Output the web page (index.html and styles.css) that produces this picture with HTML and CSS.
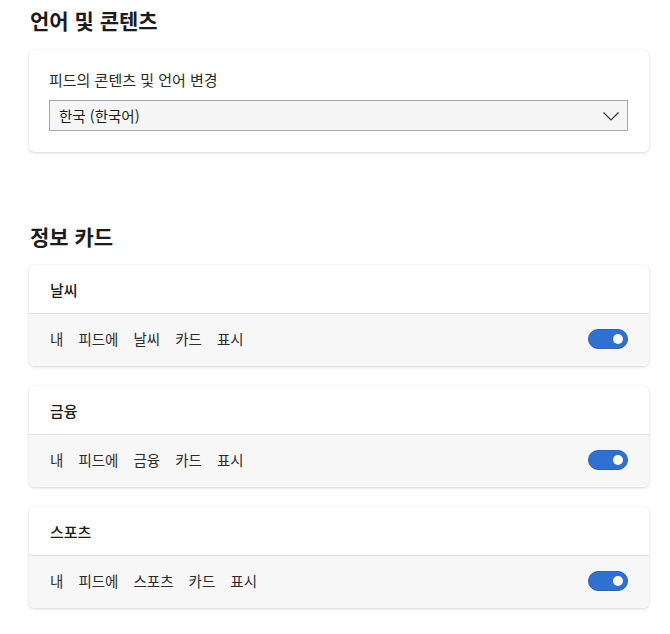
FILE: index.html
```html
<!DOCTYPE html>
<html lang="ko">
<head>
    <meta charset="UTF-8">
    <meta name="viewport" content="width=device-width, initial-scale=1.0">
    <title>피드 설정</title>
    <link rel="stylesheet" href="styles.css">
</head>
<body>
    <div class="page">
        <h2 class="section-title">언어 및 콘텐츠</h2>
        <div class="card lang-card">
            <label class="field-label" for="lang">피드의 콘텐츠 및 언어 변경</label>
            <div class="select-wrap">
                <select id="lang" class="select">
                    <option>한국 (한국어)</option>
                </select>
                <svg class="chevron" width="16" height="9" viewBox="0 0 16 9">
                    <path d="M0.5 0.5 L8 8 L15.5 0.5" fill="none" stroke="#333" stroke-width="1.2"/>
                </svg>
            </div>
        </div>

        <h2 class="section-title info-title">정보 카드</h2>

        <div class="card info-card">
            <div class="info-head">날씨</div>
            <div class="info-body">
                <span class="info-text">내 피드에 날씨 카드 표시</span>
                <span class="toggle on"><span class="knob"></span></span>
            </div>
        </div>

        <div class="card info-card">
            <div class="info-head">금융</div>
            <div class="info-body">
                <span class="info-text">내 피드에 금융 카드 표시</span>
                <span class="toggle on"><span class="knob"></span></span>
            </div>
        </div>

        <div class="card info-card">
            <div class="info-head">스포츠</div>
            <div class="info-body">
                <span class="info-text">내 피드에 스포츠 카드 표시</span>
                <span class="toggle on"><span class="knob"></span></span>
            </div>
        </div>
    </div>
</body>
</html>
```

FILE: styles.css
```css
* {
    margin: 0;
    padding: 0;
    box-sizing: border-box;
}

body {
    font-family: 'Noto Sans CJK KR', 'Noto Sans', sans-serif;
    background: #fff;
    color: #1b1b1b;
}

.page {
    width: 620px;
    margin-left: 29px;
    padding-top: 6px;
}

.section-title {
    font-size: 21px;
    line-height: 28px;
    font-weight: bold;
    padding-left: 1px;
    margin-bottom: 16px;
}

.info-title {
    margin-top: 70px;
    margin-bottom: 15px;
}

.card {
    background: #fff;
    border-radius: 5px;
    box-shadow: 0 1px 3px rgba(0, 0, 0, 0.16), 0 0 1px rgba(0, 0, 0, 0.08);
    overflow: hidden;
}

.lang-card {
    padding: 20px 21px 21px 20px;
}

.field-label {
    display: block;
    font-size: 15px;
    line-height: 20px;
    color: #2b2b2b;
    margin-bottom: 10px;
}

.select-wrap {
    position: relative;
}

.select {
    appearance: none;
    -webkit-appearance: none;
    display: block;
    width: 100%;
    height: 31px;
    padding-left: 9px;
    font-family: inherit;
    font-size: 14.5px;
    color: #1b1b1b;
    background: #f5f5f5;
    border: 1px solid #a8a8a8;
    border-radius: 0;
    outline: none;
}

.chevron {
    position: absolute;
    right: 9px;
    top: 12px;
    pointer-events: none;
}

.info-card {
    margin-bottom: 20px;
}

.info-head {
    height: 49px;
    display: flex;
    align-items: center;
    padding: 0 21px;
    font-size: 15px;
    font-weight: 500;
    color: #1b1b1b;
    border-bottom: 1px solid #e1e1e1;
}

.info-body {
    height: 52px;
    display: flex;
    align-items: center;
    justify-content: space-between;
    padding: 0 21px;
    background: #f7f7f7;
}

.info-text {
    font-size: 14.5px;
    color: #2b2b2b;
    word-spacing: 11px;
    margin-top: -3px;
}

.toggle {
    width: 40px;
    height: 20px;
    border-radius: 10px;
    background: #2f70d1;
    border: 1px solid #2a63b8;
    display: flex;
    align-items: center;
    justify-content: flex-end;
    padding-right: 4px;
    margin-top: -3px;
}

.knob {
    width: 10px;
    height: 10px;
    border-radius: 50%;
    background: #fff;
}
```
